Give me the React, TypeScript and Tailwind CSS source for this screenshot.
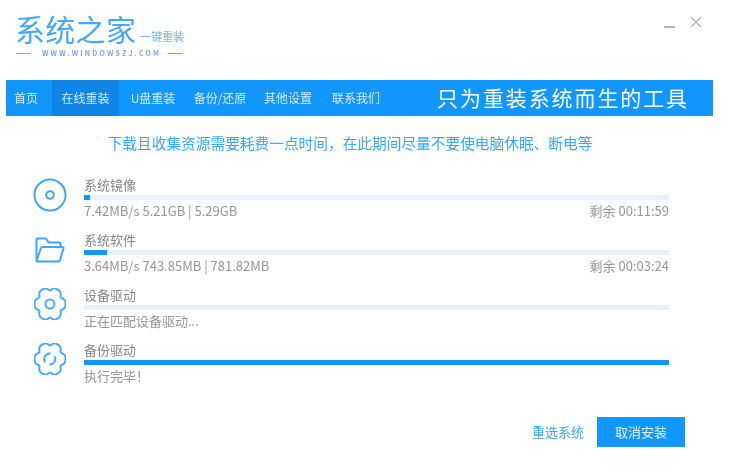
import type { ReactNode } from "react";

const cjk = { fontFamily: '"Noto Sans CJK SC", "Noto Sans", sans-serif' };

const tabs = [
  { label: "首页", width: "w-[46px] pr-[6px]" },
  { label: "在线重装", width: "w-[67px]", active: true },
  { label: "U盘重装", width: "w-[68px]" },
  { label: "备份/还原", width: "w-[66px]" },
  { label: "其他设置", width: "w-[70px]" },
  { label: "联系我们", width: "w-[66px]" },
];

function Disc() {
  return (
    <svg width="34" height="34" viewBox="0 0 34 34" fill="none" stroke="#3ea6fb" strokeWidth="2">
      <circle cx="17" cy="17" r="15.500" />
      <circle cx="17" cy="17" r="3.800" />
    </svg>
  );
}

function Folder() {
  return (
    <svg width="30" height="26" viewBox="0 0 30 26" fill="none" stroke="#3ea6fb" strokeWidth="2" strokeLinejoin="round">
      <path d="M1.500 24V2.500a1 1 0 0 1 1-1h8.500l2.500 4h11a1 1 0 0 1 1 1V10" />
      <path d="M1.500 24 6 11a1.500 1.500 0 0 1 1.400-1h20.100a1 1 0 0 1 1 1.300L25 23.500a1.500 1.500 0 0 1-1.400 1H2.500a1 1 0 0 1-1-.5Z" />
    </svg>
  );
}

// six broad teeth with small notches, notches at top and bottom
function gearPath() {
  const pt = (deg: number, r: number) => {
    const a = (deg * Math.PI) / 180;
    const x = 16 + r * Math.cos(a);
    const y = 16 + r * Math.sin(a) * 1.08;
    return `${x.toFixed(2)} ${y.toFixed(2)}`;
  };
  let d = `M${pt(-30, 12.4)}`;
  for (let i = 0; i < 6; i++) {
    const a = i * 60;
    d += `C${pt(a - 25, 12.2)} ${pt(a - 20, 15.6)} ${pt(a - 9, 15.4)}`;
    d += `Q${pt(a, 15.8)} ${pt(a + 9, 15.4)}`;
    d += `C${pt(a + 20, 15.6)} ${pt(a + 25, 12.2)} ${pt(a + 30, 12.4)}`;
  }
  return d + "Z";
}

function Gear({ spin }: { spin?: boolean }) {
  return (
    <svg width="32" height="32" viewBox="0 0 32 32" fill="none" stroke="#4aabfb" strokeWidth="2" strokeLinejoin="round" className="-mt-[2px]">
      <path d={gearPath()} />
      {spin ? (
        <>
          <path d="M10.800 18.500a5.500 5.500 0 0 1 5-8" strokeLinecap="round" />
          <path d="M21 14a5.500 5.500 0 0 1-5 7.500" strokeLinecap="round" />
        </>
      ) : (
        <circle cx="16" cy="16" r="4.500" />
      )}
    </svg>
  );
}

const rows: {
  icon: ReactNode;
  title: string;
  progress: string;
  status: string;
  remain?: string;
}[] = [
  { icon: <Disc />, title: "系统镜像", progress: "w-[1%]", status: "7.42MB/s 5.21GB | 5.29GB", remain: "剩余 00:11:59" },
  { icon: <Folder />, title: "系统软件", progress: "w-[4%]", status: "3.64MB/s 743.85MB | 781.82MB", remain: "剩余 00:03:24" },
  { icon: <Gear />, title: "设备驱动", progress: "w-0", status: "正在匹配设备驱动..." },
  { icon: <Gear spin />, title: "备份驱动", progress: "w-full", status: "执行完毕！" },
];

export default function App() {
  return (
    <div className="h-[476px] w-[739px] overflow-hidden bg-white blur-[0.4px]" style={cjk}>
      <header className="flex h-20 items-start justify-between pl-[15px] pr-[37px]">
        <div className="pt-[10px]">
          <div className="flex items-end">
            <span className="text-[30px] leading-[36px] tracking-[0.3px] text-[#45a8f8]">系统之家</span>
            <span className="mb-[2px] ml-1 text-[11px] leading-[16px] text-[#6db9f6]">一键重装</span>
          </div>
          <div className="ml-px mt-[2px] flex items-center">
            <span className="h-px w-[15px] bg-[#5fb2f6]" />
            <span className="ml-[11px] mr-[7px] text-[7px] font-bold leading-[10px] tracking-[2.200px] text-[#7fa9e6]">
              WWW.WINDOWSZJ.COM
            </span>
            <span className="h-px w-[15px] bg-[#5fb2f6]" />
          </div>
        </div>
        <div className="flex items-center gap-[15px] pt-[16px] text-[#b5b5b5]">
          <span className="mt-[9px] h-[2px] w-[11px] bg-[#b5b5b5]" />
          <svg width="12" height="12" viewBox="0 0 12 12" stroke="currentColor" strokeWidth="1.400">
            <path d="M1 1l10 10M11 1 1 11" />
          </svg>
        </div>
      </header>

      <nav className="mx-[6px] flex h-9 w-[707px] items-center justify-between bg-[#1296ff] pr-6 text-white">
        <div className="flex h-full items-stretch">
          {tabs.map((t) => (
            <span
              key={t.label}
              className={`flex items-center justify-center text-[12px] text-[#d4ecff] ${t.width} ${t.active ? "bg-[#0f86e6]" : ""}`}
            >
              {t.label}
            </span>
          ))}
        </div>
        <span className="text-[21px] tracking-[1.900px]">只为重装系统而生的工具</span>
      </nav>

      <p className="mt-[17px] pr-[39px] text-center text-[14.700px] leading-[20px] text-[#3aa8f5]">
        下载且收集资源需要耗费一点时间，在此期间尽量不要使电脑休眠、断电等
      </p>

      <div className="mt-[24px] flex flex-col gap-[9px] pl-[33px] pr-[70px]">
        {rows.map((r) => (
          <div key={r.title} className="flex h-[46px] items-start">
            <div className="mt-px flex h-[34px] w-[51px] shrink-0 items-center justify-center pr-[17px]">{r.icon}</div>
            <div className="min-w-0 flex-1">
              <div className="text-[13px] leading-[16px] text-[#858585]">{r.title}</div>
              <div className="mt-[2px] h-[5px] bg-[#e8f1fb]">
                <div className={`h-full bg-[#1296ff] ${r.progress}`} />
              </div>
              <div className="mt-[3px] flex justify-between text-[13px] leading-[16px] text-[#969696]">
                <span>{r.status}</span>
                {r.remain ? <span>{r.remain}</span> : null}
              </div>
            </div>
          </div>
        ))}
      </div>

      <footer className="mt-[29px] flex items-center justify-end gap-[13px] pr-[54px]">
        <span className="text-[13px] text-[#3aa8f5]">重选系统</span>
        <span className="flex h-[30px] w-[88px] items-center justify-center bg-[#1296ff] text-[13px] text-[#e2f2ff]">
          取消安装
        </span>
      </footer>
    </div>
  );
}
